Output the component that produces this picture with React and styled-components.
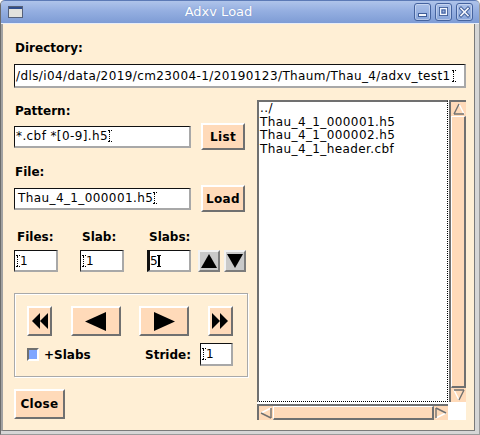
import React from 'react';
import styled, { createGlobalStyle } from 'styled-components';

const BG = '#ffefd5';
const BTN = '#ffdab9';
const SH = '#707070';

const GlobalStyle = createGlobalStyle`
  html, body { margin: 0; padding: 0; background: #ffffff; }
  body { width: 480px; height: 435px; overflow: hidden; font-family: "DejaVu Sans", sans-serif; }
  *, *::before, *::after { box-sizing: border-box; }
`;

const Window = styled.div`
  width: 480px;
  height: 435px;
  display: flex;
  flex-direction: column;
  background: #d6d6d6;
  border-left: 1px solid #6c6c6c;
  border-right: 1px solid #9a9a9a;
  border-bottom: 1px solid #9a9a9a;
  border-radius: 5px 5px 0 0;
  overflow: hidden;
`;

const TitleBar = styled.div`
  flex: none;
  height: 24px;
  margin: 0 -1px;
  display: flex;
  align-items: center;
  padding: 0 7px 0 8px;
  background: linear-gradient(#afc4ea 0%, #95afe1 45%, #7e9cd5 100%);
  border-top: 1px solid #5c7ab6;
  border-bottom: 1px solid #e8eef8;
  border-radius: 5px 5px 0 0;
`;

const Title = styled.div`
  flex: 1;
  text-align: center;
  color: #ffffff;
  font-family: "DejaVu Sans", sans-serif;
  font-size: 13px;
  line-height: 16px;
  text-shadow: 0 0 1px rgba(60, 90, 150, 0.4);
`;

const TitleButtons = styled.div`
  display: flex;
  gap: 4px;
`;

const TitleButton = styled.div`
  width: 17px;
  height: 18px;
  display: flex;
  align-items: center;
  justify-content: center;
  border: 1px solid #45639f;
  border-radius: 3px;
  background: linear-gradient(#a9bfe8, #89a6da);
  box-shadow: inset 0 0 0 1px rgba(255, 255, 255, 0.35);
`;

const Body = styled.div`
  flex: 1;
  margin: 0 4px 3px 0;
  background: ${BG};
  border-left: 2px solid #a2a2a2;
  border-right: 1px solid #7a7a7a;
  border-bottom: 1px solid #7a7a7a;
  padding: 17px 8px 0 11px;
  display: flex;
  flex-direction: column;
`;

const Label = styled.div`
  font-family: "DejaVu Sans", sans-serif;
  font-weight: bold;
  font-size: 12px;
  line-height: 14px;
  height: 14px;
  color: #000;
  padding-left: ${(p) => p.$indent ?? 1}px;
  margin-top: ${(p) => p.$mt ?? 0}px;
  white-space: nowrap;
`;

const TextField = styled.div`
  width: ${(p) => p.$w}px;
  height: ${(p) => p.$h ?? 22}px;
  margin-top: ${(p) => p.$mt ?? 0}px;
  background: #ffffff;
  border-style: solid;
  border-width: 1px 2px 2px ${(p) => (p.$focus ? 3 : 1)}px;
  border-color: #111 #a8a8a8 #a8a8a8 #111;
  display: flex;
  align-items: center;
  padding-left: ${(p) => p.$pl ?? 1}px;
  font-family: "DejaVu Sans", sans-serif;
  font-size: 12px;
  letter-spacing: 0.4px;
  color: #000;
  white-space: nowrap;
  overflow: hidden;
  flex: none;
`;

const Caret = styled.span`
  position: relative;
  display: inline-block;
  width: 4px;
  height: 12px;
  margin-left: ${(p) => p.$ml ?? 0}px;
  border-top: 1px ${(p) => (p.$solid ? 'solid' : 'dotted')} #000;
  border-bottom: 1px ${(p) => (p.$solid ? 'solid' : 'dotted')} #000;
  &::before {
    content: '';
    position: absolute;
    left: 1px;
    top: 0;
    bottom: 0;
    border-left: ${(p) => (p.$solid ? '2px solid' : '1px dotted')} #000;
  }
`;

const Columns = styled.div`
  display: flex;
  gap: 9px;
  margin-top: 12px;
`;

const LeftCol = styled.div`
  width: 234px;
  flex: none;
  padding-top: 4px;
  display: flex;
  flex-direction: column;
`;

const FieldRow = styled.div`
  display: flex;
  align-items: center;
  gap: 10px;
  height: 27px;
  margin-top: ${(p) => p.$mt ?? 0}px;
`;

const Button = styled.button`
  width: ${(p) => p.$w}px;
  height: ${(p) => p.$h}px;
  margin: 0;
  margin-top: ${(p) => p.$mt ?? 0}px;
  padding: 0;
  background: ${BTN};
  border-style: solid;
  border-width: 2px;
  border-color: #ffffff ${SH} ${SH} #ffffff;
  font-family: "DejaVu Sans", sans-serif;
  font-weight: bold;
  font-size: 12px;
  letter-spacing: 0.3px;
  color: #000;
  display: flex;
  align-items: center;
  justify-content: center;
  flex: none;
`;

const CounterGrid = styled.div`
  display: grid;
  grid-template-columns: 66px 67px 51px 1fr;
  grid-template-rows: 14px 22px;
  row-gap: 6px;
  margin-top: 18px;
`;

const ArrowPair = styled.div`
  display: flex;
  gap: 4px;
`;

const ArrowButton = styled.div`
  width: 22px;
  height: 22px;
  background: #c9c9c9;
  border-style: solid;
  border-width: 2px;
  border-color: #f2f2f2 #7c7c7c #7c7c7c #f2f2f2;
  display: flex;
  align-items: center;
  justify-content: center;
`;

const Group = styled.div`
  margin-top: 21px;
  height: 84px;
  border: 1px solid #a9a9a9;
  box-shadow: inset 1px 1px 0 #ffffff, 1px 1px 0 #ffffff;
  padding: 12px 14px 0 12px;
  display: flex;
  flex-direction: column;
`;

const NavRow = styled.div`
  display: flex;
  justify-content: space-between;
`;

const OptionRow = styled.div`
  display: flex;
  align-items: center;
  margin-top: 7px;
  height: 23px;
`;

const Check = styled.div`
  width: 12px;
  height: 13px;
  background: #7ea6ff;
  border-style: solid;
  border-width: 2px;
  border-color: ${SH} #ffffff #ffffff ${SH};
  margin-right: 5px;
`;

const Spacer = styled.div`
  flex: 1;
`;

const StrideField = styled(TextField)`
  margin-left: 9px;
`;

const RightCol = styled.div`
  flex: 1;
  height: 320px;
  background: #ffffff;
  display: grid;
  grid-template-columns: 1fr 17px;
  grid-template-rows: 1fr 16px;
  column-gap: 1px;
  row-gap: 2px;
`;

const List = styled.div`
  border-style: solid;
  border-width: 2px 1px 1px 2px;
  border-color: ${SH};
  border-right: 1px dotted #000;
  border-bottom: 1px dotted #000;
  padding: 0 0 0 1px;
  font-family: "DejaVu Sans", sans-serif;
  font-size: 12px;
  letter-spacing: 0.4px;
  line-height: 13.5px;
  color: #000;
  overflow: hidden;
`;

const ListItem = styled.div`
  white-space: nowrap;
`;

const ScrollBar = styled.div`
  display: flex;
  flex-direction: ${(p) => (p.$vertical ? 'column' : 'row')};
  background: ${BTN};
  border-top: 2px solid ${SH};
  border-left: 2px solid ${SH};
`;

const ScrollArrowBox = styled.div`
  flex: none;
  width: ${(p) => (p.$vertical ? '15px' : '14px')};
  height: 14px;
  display: flex;
  align-items: center;
  justify-content: center;
`;

const Slider = styled.div`
  flex: 1;
  background: ${BTN};
  border-style: solid;
  border-width: 1px 2px 2px 1px;
  border-color: #ffffff ${SH} ${SH} #ffffff;
`;

const ScrollArrow = ({ dir, vertical }) => {
  const rot = { up: 0, right: 90, down: 180, left: 270 }[dir];
  return (
    <ScrollArrowBox $vertical={vertical}>
      <svg width="12" height="12" viewBox="0 0 12 12">
        <g transform={`rotate(${rot} 6 6)`}>
          <polygon points="6,1 1,11 11,11" fill={BTN} />
          <line x1="6" y1="1" x2="11" y2="11" stroke="#ffffff" strokeWidth="1.4" />
          <line x1="6" y1="1" x2="1" y2="11" stroke={SH} strokeWidth="1.4" />
          <line x1="1" y1="11" x2="11" y2="11" stroke={SH} strokeWidth="1.4" />
        </g>
      </svg>
    </ScrollArrowBox>
  );
};

const WinIcon = () => (
  <svg width="15" height="12" viewBox="0 0 15 12">
    <rect x="0.5" y="0.5" width="14" height="11" fill="#e2e2de" stroke="#55617a" />
    <rect x="1" y="1" width="13" height="2" fill="#2f4d8c" />
  </svg>
);

const MinGlyph = () => (
  <svg width="11" height="12" viewBox="0 0 11 12">
    <rect x="1.5" y="7.5" width="8" height="3" fill="#f4f7fc" stroke="#3f5d98" />
  </svg>
);
const MaxGlyph = () => (
  <svg width="11" height="12" viewBox="0 0 11 12">
    <rect x="1.5" y="1.5" width="8" height="8" fill="none" stroke="#3f5d98" strokeWidth="1" />
    <rect x="2.5" y="2.5" width="6" height="6" fill="none" stroke="#f4f7fc" strokeWidth="1.2" />
    <rect x="4" y="4" width="3" height="3" fill="none" stroke="#3f5d98" strokeWidth="1" />
  </svg>
);
const CloseGlyph = () => (
  <svg width="11" height="12" viewBox="0 0 11 12">
    <path d="M2 2.5 L9 9.5 M9 2.5 L2 9.5" stroke="#3f5d98" strokeWidth="3.4" strokeLinecap="square" />
    <path d="M2 2.5 L9 9.5 M9 2.5 L2 9.5" stroke="#f4f7fc" strokeWidth="1.6" strokeLinecap="square" />
  </svg>
);

const Tri = ({ dir, w, h }) => (
  <svg width={w} height={h} viewBox={`0 0 ${w} ${h}`}>
    {dir === 'left' ? (
      <polygon points={`${w},0 0,${h / 2} ${w},${h}`} fill="#000" />
    ) : (
      <polygon points={`0,0 ${w},${h / 2} 0,${h}`} fill="#000" />
    )}
  </svg>
);

const DoubleTri = ({ dir }) => (
  <svg width="16" height="16" viewBox="0 0 16 16">
    {dir === 'left' ? (
      <>
        <polygon points="8,0 0,8 8,16" fill="#000" />
        <polygon points="16,0 8,8 16,16" fill="#000" />
      </>
    ) : (
      <>
        <polygon points="0,0 8,8 0,16" fill="#000" />
        <polygon points="8,0 16,8 8,16" fill="#000" />
      </>
    )}
  </svg>
);

const SmallArrow = ({ up }) => (
  <svg width="16" height="16" viewBox="0 0 16 16">
    {up ? <polygon points="8,1 0,15 16,15" fill="#000" /> : <polygon points="0,1 16,1 8,15" fill="#000" />}
  </svg>
);

export default function App() {
  return (
    <>
      <GlobalStyle />
      <Window>
        <TitleBar>
          <WinIcon />
          <Title>Adxv Load</Title>
          <TitleButtons>
            <TitleButton><MinGlyph /></TitleButton>
            <TitleButton><MaxGlyph /></TitleButton>
            <TitleButton><CloseGlyph /></TitleButton>
          </TitleButtons>
        </TitleBar>
        <Body>
          <Label>Directory:</Label>
          <TextField $w={452} $h={24} $mt={9}>
            /dls/i04/data/2019/cm23004-1/20190123/Thaum/Thau_4/adxv_test1
            <Caret $ml={1} />
          </TextField>
          <Columns>
            <LeftCol>
              <Label>Pattern:</Label>
              <FieldRow $mt={5}>
                <TextField $w={177}>
                  *.cbf *[0-9].h5
                  <Caret />
                </TextField>
                <Button $w={44} $h={27}>List</Button>
              </FieldRow>
              <Label $mt={15}>File:</Label>
              <FieldRow $mt={6}>
                <TextField $w={177} $pl={3}>
                  Thau_4_1_000001.h5
                  <Caret />
                </TextField>
                <Button $w={44} $h={27}>Load</Button>
              </FieldRow>
              <CounterGrid>
                <Label $indent={3}>Files:</Label>
                <Label $indent={2}>Slab:</Label>
                <Label $indent={2}>Slabs:</Label>
                <div />
                <TextField $w={44}><Caret />1</TextField>
                <TextField $w={44}><Caret />1</TextField>
                <TextField $w={44} $focus $pl={0}>5<Caret $solid $ml={-1} /></TextField>
                <ArrowPair>
                  <ArrowButton><SmallArrow up /></ArrowButton>
                  <ArrowButton><SmallArrow /></ArrowButton>
                </ArrowPair>
              </CounterGrid>
              <Group>
                <NavRow>
                  <Button $w={25} $h={30}><DoubleTri dir="left" /></Button>
                  <Button $w={50} $h={30}><Tri dir="left" w={21} h={19} /></Button>
                  <Button $w={50} $h={30}><Tri dir="right" w={21} h={19} /></Button>
                  <Button $w={25} $h={30}><DoubleTri dir="right" /></Button>
                </NavRow>
                <OptionRow>
                  <Check />
                  <Label $indent={0}>+Slabs</Label>
                  <Spacer />
                  <Label $indent={0}>Stride:</Label>
                  <StrideField $w={33} $h={23}>
                    <Caret />1
                  </StrideField>
                </OptionRow>
              </Group>
              <Button $w={51} $h={30} $mt={12}>Close</Button>
            </LeftCol>
            <RightCol>
              <List>
                <ListItem>../</ListItem>
                <ListItem>Thau_4_1_000001.h5</ListItem>
                <ListItem>Thau_4_1_000002.h5</ListItem>
                <ListItem>Thau_4_1_header.cbf</ListItem>
              </List>
              <ScrollBar $vertical>
                <ScrollArrow dir="up" vertical />
                <Slider />
                <ScrollArrow dir="down" vertical />
              </ScrollBar>
              <ScrollBar>
                <ScrollArrow dir="left" />
                <Slider />
                <ScrollArrow dir="right" />
              </ScrollBar>
            </RightCol>
          </Columns>
        </Body>
      </Window>
    </>
  );
}
